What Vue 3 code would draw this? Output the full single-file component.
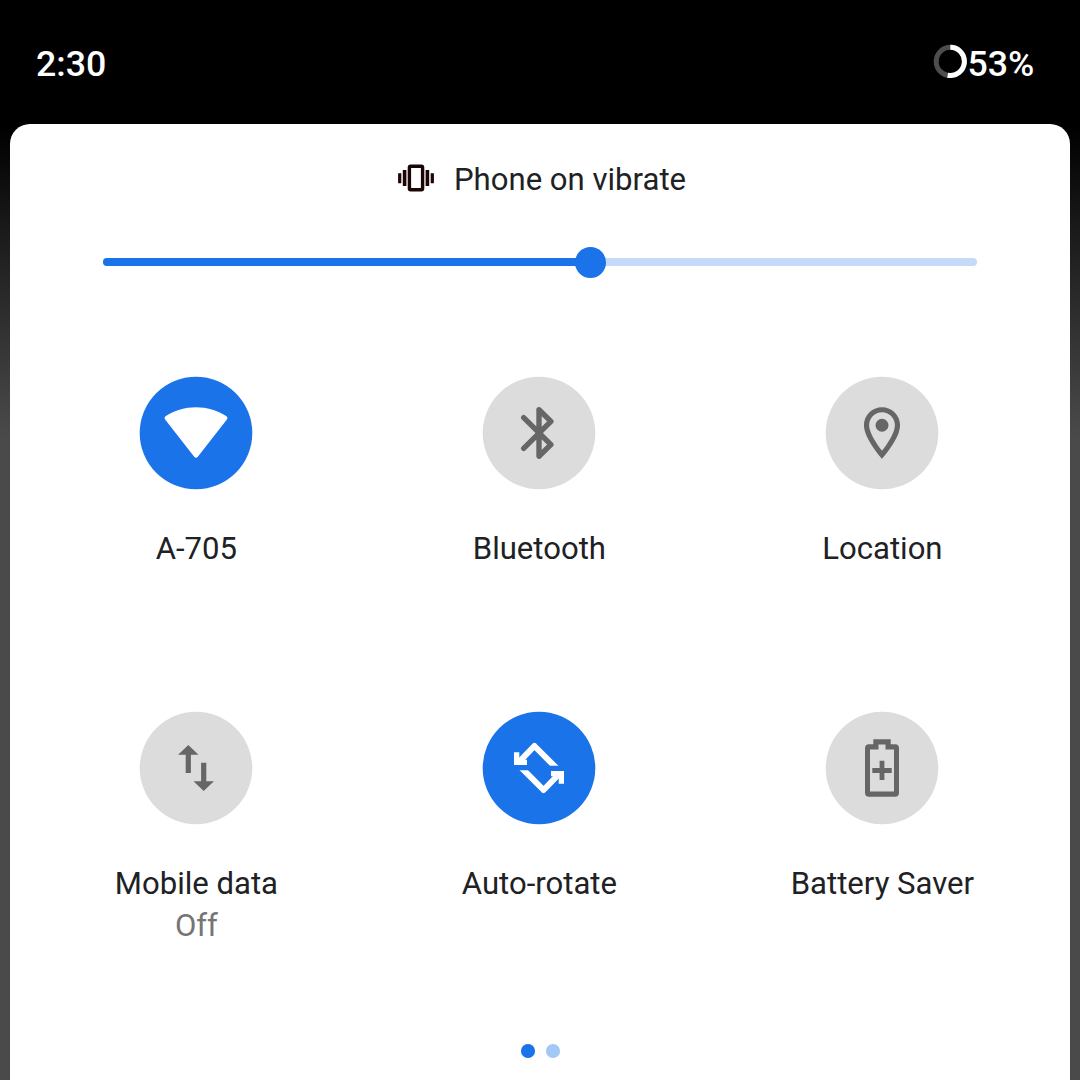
<script setup>
const tiles = [
  { id: 'wifi', label: 'A-705', active: true },
  { id: 'bluetooth', label: 'Bluetooth' },
  { id: 'location', label: 'Location' },
  { id: 'data', label: 'Mobile data', detail: 'Off' },
  { id: 'rotate', label: 'Auto-rotate', active: true },
  { id: 'battery', label: 'Battery Saver' },
]
const brightness = 55.8
</script>

<template>
  <div class="screen">
    <header class="status">
      <span class="clock">2:30</span>
      <div class="charge">
        <svg class="ring" width="34" height="34" viewBox="-17.3 -17.4 34 34" fill="none" stroke-width="5">
          <circle r="14.1" stroke="#4d4d4d" />
          <path d="M0-14.1A14.1 14.1 0 1 1-2.64 13.85" stroke="#fff" />
        </svg>
        <span class="percent">53%</span>
      </div>
    </header>

    <main class="panel">
      <div class="ringer">
        <svg width="38" height="30" viewBox="-19 -15 38 30">
          <rect x="-6.6" y="-11.7" width="13.2" height="23.4" rx="1.2" fill="none" stroke="#1c0505" stroke-width="3.4" />
          <path d="M-17.9-4.8h3.2v10h-3.2zM-13.2-8h3.6v16h-3.6zM9.6-8H13.2V8H9.6zM14.7-4.8h3.2v10h-3.2z" fill="#1c0505" />
        </svg>
        <span>Phone on vibrate</span>
      </div>

      <div class="slider">
        <div class="fill" :style="{ width: brightness + '%' }"><i class="thumb"></i></div>
      </div>

      <section class="tiles">
        <div v-for="t in tiles" :key="t.id" class="tile">
          <svg class="icon" :class="{ on: t.active }" width="114" height="114" viewBox="-57 -57 114 114" fill="currentColor">
            <circle class="disc" r="56.3" />
            <path v-if="t.id === 'wifi'" d="M-30.7-13.2Q-32.4-15.3-30.1-16.9C-12.5-28.6 12.5-28.6 30.1-16.9Q32.4-15.3 30.7-13.2L1.8 23.8Q0 25.8-1.8 23.8Z" />
            <path v-else-if="t.id === 'bluetooth'" d="M-15.3-15.3L11.9 11.6L0 23.2V-23.2L11.9-11.6L-15.3 15.3" fill="none" stroke="currentColor" stroke-width="5.4" stroke-linecap="round" stroke-linejoin="round" />
            <g v-else-if="t.id === 'location'" transform="scale(2.58) translate(-12 -12)">
              <path d="M12 2C8.13 2 5 5.13 5 9c0 5.25 7 13 7 13s7-7.75 7-13c0-3.87-3.13-7-7-7zM7 9c0-2.76 2.24-5 5-5s5 2.24 5 5c0 2.88-2.88 7.19-5 9.88C9.92 16.21 7 11.85 7 9z" />
              <circle cx="12" cy="9" r="2.5" />
            </g>
            <path v-else-if="t.id === 'data'" d="M-7.7-23.1L2.5-13.2H-5.1V5H-10.3V-13.2H-17.9ZM7.7 23.1L-2.5 13.2H5.1V-5.2H10.3V13.2H17.9Z" />
            <template v-else-if="t.id === 'rotate'">
              <clipPath id="upper"><rect x="-30" y="-30" width="60" height="27.7" /></clipPath>
              <g v-for="a in [0, 180]" :key="a" :transform="`rotate(${a})`">
                <g clip-path="url(#upper)">
                  <path d="M-21-5L-4.6-22L17.8 0.4" fill="none" stroke="currentColor" stroke-width="6" stroke-linejoin="round" />
                  <path d="M-25-15.7H-19.7V-8.2H-12V-2.9H-25Z" />
                </g>
              </g>
            </template>
            <template v-else>
              <path fill-rule="evenodd" d="M-8.7-28.7H8.7V-23.8H13Q17-23.8 17-19.8V24.7Q17 28.7 13 28.7H-13Q-17 28.7-17 24.7V-19.8Q-17-23.8-13-23.8H-8.7ZM-3.5-23.5V-18.4H-12V23.6H12V-18.4H3.5V-23.5Z" />
              <path d="M-2.4-7.2H2.4V0H9.7V4.9H2.4V12.1H-2.4V4.9H-9.7V0H-2.4Z" />
            </template>
          </svg>
          <span class="label">{{ t.label }}</span>
          <span v-if="t.detail" class="detail">{{ t.detail }}</span>
        </div>
      </section>

      <div class="pages"><i class="current"></i><i></i></div>
    </main>
  </div>
</template>

<style>
body {
  margin: 0;
  overflow: hidden;
}
</style>

<style scoped>
.screen {
  width: 1080px;
  height: 1080px;
  box-sizing: border-box;
  overflow: hidden;
  display: flex;
  flex-direction: column;
  background: linear-gradient(#000 124px, #0a0a0a 167px, #1b1b1b 233px, #2a2a2a 300px, #424242 400px, #4a4a4a 440px, #4a4a4a);
  font-family: Roboto, "Liberation Sans", sans-serif;
}
.status {
  flex: none;
  height: 124px;
  box-sizing: border-box;
  padding: 43px 45.6px 0 36px;
  display: flex;
  justify-content: space-between;
  color: #fff;
  font-size: 35.7px;
  line-height: 42px;
  font-weight: 500;
}
.charge {
  display: flex;
  gap: 1px;
}
.ring {
  margin-top: 1px;
}
.panel {
  flex: 1;
  margin: 0 10px;
  border-radius: 20px 20px 0 0;
  background: #fff;
  display: flex;
  flex-direction: column;
  color: #202124;
  font-size: 31.1px;
  line-height: 42px;
}
.ringer {
  height: 42px;
  margin-top: 35px;
  padding-left: 387px;
  display: flex;
  align-items: center;
  gap: 19px;
  white-space: nowrap;
}
.ringer svg {
  margin-top: -4px;
}
.slider {
  width: 874px;
  height: 8px;
  margin: 57px 0 0 93px;
  border-radius: 4px;
  background: #c3daf9;
}
.fill {
  height: 8px;
  border-radius: 4px;
  background: #1a73e8;
  display: flex;
  align-items: center;
  justify-content: flex-end;
}
.thumb {
  flex: none;
  width: 31px;
  height: 31px;
  margin: 1px -15.5px 0 0;
  border-radius: 50%;
  background: #1a73e8;
}
.tiles {
  margin: 110px 0 0 14.5px;
  width: 1029px;
  display: grid;
  grid-template-columns: repeat(3, 343px);
  grid-auto-rows: 335px;
}
.tile {
  display: flex;
  flex-direction: column;
  align-items: center;
}
.icon {
  display: block;
  margin-bottom: 38px;
  color: #666;
}
.icon.on {
  color: #fff;
}
.disc {
  fill: #dcdcdc;
}
.on .disc {
  fill: #1a73e8;
}
.label,
.detail {
  padding-left: 0.8px;
}
.detail {
  color: #757575;
}
.pages {
  display: flex;
  gap: 11.4px;
  margin: -2px 0 0 511.1px;
}
.pages i {
  width: 13.6px;
  height: 13.6px;
  border-radius: 50%;
  background: #a3c7f6;
}
.pages .current {
  background: #1a73e8;
}
</style>
